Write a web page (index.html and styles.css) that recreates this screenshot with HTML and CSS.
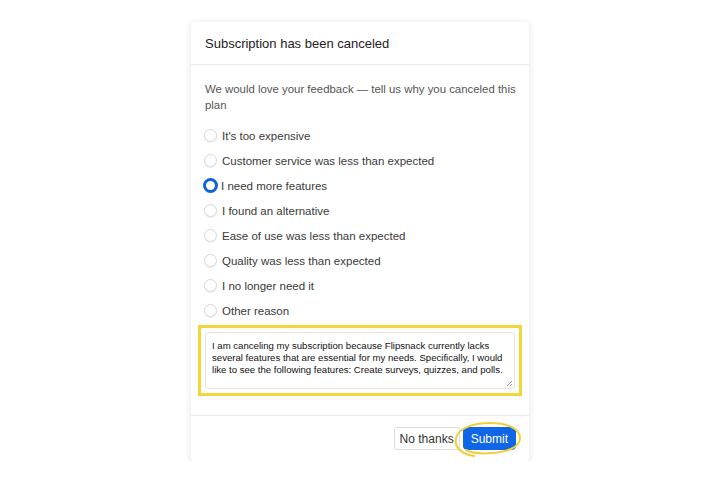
FILE: index.html
```html
<!DOCTYPE html>
<html lang="en">
<head>
    <meta charset="UTF-8">
    <meta name="viewport" content="width=device-width, initial-scale=1.0">
    <title>Subscription canceled</title>
    <link rel="stylesheet" href="styles.css">
</head>
<body>
    <div class="modal">
        <div class="modal-header">Subscription has been canceled</div>

        <div class="modal-body">
            <p class="intro">We would love your feedback — tell us why you canceled this plan</p>

            <ul class="reasons">
                <li><span class="radio"></span>It's too expensive</li>
                <li><span class="radio"></span>Customer service was less than expected</li>
                <li><span class="radio checked"></span>I need more features</li>
                <li><span class="radio"></span>I found an alternative</li>
                <li><span class="radio"></span>Ease of use was less than expected</li>
                <li><span class="radio"></span>Quality was less than expected</li>
                <li><span class="radio"></span>I no longer need it</li>
                <li><span class="radio"></span>Other reason</li>
            </ul>

            <div class="highlight">
                <div class="feedback">I am canceling my subscription because Flipsnack currently lacks several features that are essential for my needs. Specifically, I would like to see the following features: Create surveys, quizzes, and polls.<span class="grip"></span></div>
            </div>
        </div>

        <div class="modal-footer">
            <button class="btn">No thanks</button>
            <button class="btn primary">Submit</button>
            <svg class="circled" width="72" height="40" viewBox="0 0 72 40">
                <path d="M22 36 C8 34 2 26 4 18 C6 9 20 3 38 3 C56 3 68 9 68 18 C68 27 56 32 40 33 C30 34 20 33 14 30"
                      fill="none" stroke="#f1cf3b" stroke-width="2" stroke-linecap="round"/>
            </svg>
        </div>
    </div>
</body>
</html>
```

FILE: styles.css
```css
body {
    margin: 0;
    background: #ffffff;
    font-family: "Liberation Sans", Arial, sans-serif;
    color: #333;
}
.modal {
    width: 338px;
    margin: 22px auto 0;
    background: #fff;
    border-radius: 4px;
    box-shadow: 0 1px 7px rgba(0,0,0,0.12);
}
.modal-header {
    height: 42px;
    line-height: 43px;
    padding: 0 14px;
    font-size: 13px;
    color: #222;
    border-bottom: 1px solid #ececec;
}
.modal-body {
    padding: 16px 7px 19px 7px;
}
.intro {
    margin: 0 0 0 7px;
    font-size: 11.4px;
    line-height: 16px;
    color: #555;
}
.reasons {
    list-style: none;
    margin: 10px 0 2px;
    padding: 0 6px;
}
.reasons li {
    display: flex;
    align-items: center;
    height: 25px;
    font-size: 11.5px;
    color: #3a3a3a;
}
.radio {
    width: 11px;
    height: 11px;
    border: 1px solid #d6d6d6;
    border-radius: 50%;
    margin-right: 5px;
    box-shadow: 0 1px 1px rgba(0,0,0,0.08);
    flex-shrink: 0;
}
.radio.checked {
    width: 9px;
    height: 9px;
    border: 3px solid #0d63dc;
    margin-left: -1px;
    margin-right: 3px;
    box-shadow: none;
}
.highlight {
    border: 3px solid #f5d43c;
    padding: 4px 4px;
}
.feedback {
    position: relative;
    border: 1px solid #e4e4e4;
    border-radius: 3px;
    padding: 7px 6px 12px 6px;
    font-size: 9.6px;
    line-height: 12px;
    color: #111;
}
.grip {
    position: absolute;
    right: 2px;
    bottom: 2px;
    width: 5px;
    height: 5px;
    background: linear-gradient(135deg, transparent 45%, #999 45%, #999 55%, transparent 55%, transparent 75%, #999 75%, #999 85%, transparent 85%);
}
.modal-footer {
    position: relative;
    display: flex;
    justify-content: flex-end;
    gap: 3px;
    padding: 11px 13px 11px;
    border-top: 1px solid #ececec;
}
.btn {
    height: 23px;
    padding: 0 5px;
    font-family: "Liberation Sans", Arial, sans-serif;
    font-size: 12px;
    color: #333;
    background: #fff;
    border: 1px solid #dcdcdc;
    border-radius: 3px;
}
.btn.primary {
    background: #0f66e6;
    color: #fff;
    border-color: #0f66e6;
    padding: 0 7px;
    border-radius: 4px;
}
.circled {
    position: absolute;
    right: 5px;
    top: 4px;
}
```
